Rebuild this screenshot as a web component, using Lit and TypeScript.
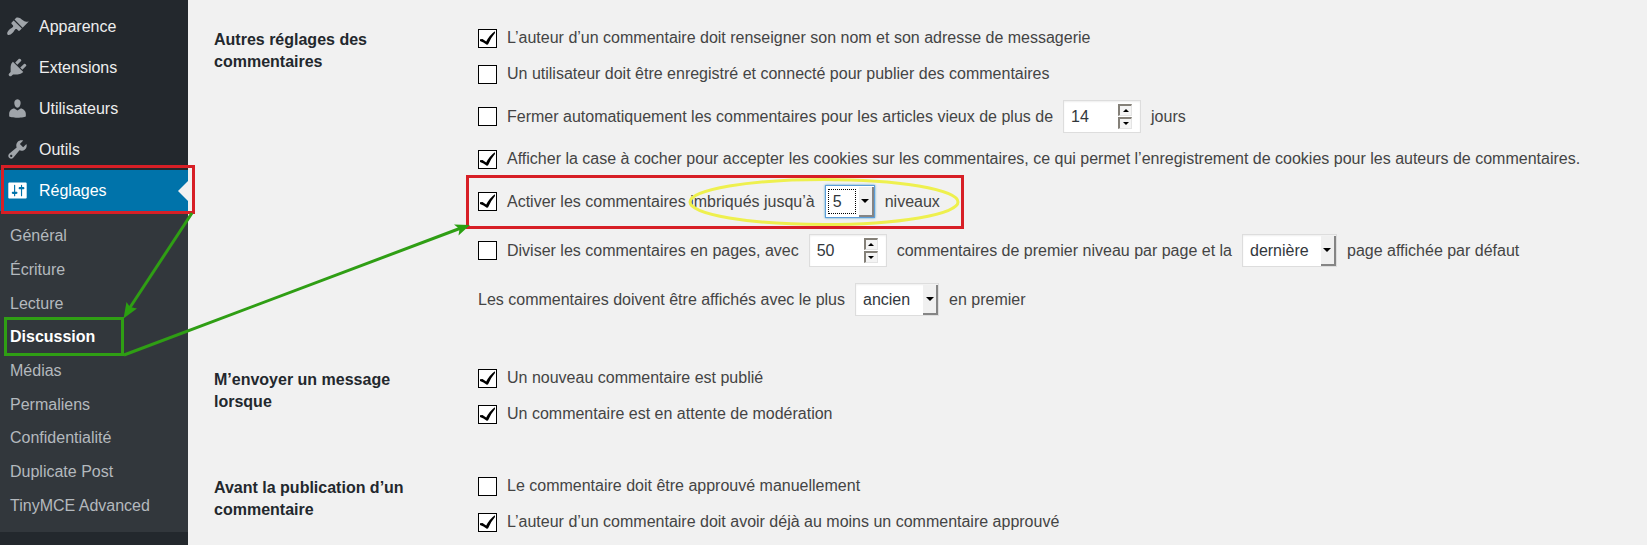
import { LitElement, html, css, nothing } from "lit";
import { customElement } from "lit/decorators.js";
import { classMap } from "lit/directives/class-map.js";

const ICONS: Record<string, string> = {
  appearance:
    "M14.48 11.06L7.41 3.99l1.5-1.5c.5-.56 2.3-.47 3.51.32 1.21.8 1.43 1.28 2.91 2.1 1.18.64 2.45 1.26 4.45.85zm-.71.71L6.7 4.7 4.93 6.47c-.39.39-.39 1.02 0 1.41l1.06 1.06c.39.39.39 1.03 0 1.42-.6.6-1.43 1.11-2.21 1.69-.35.26-.7.53-1.01.84C1.43 14.23.4 16.08 1.4 17.07c.99 1 2.84-.03 4.18-1.36.31-.31.58-.66.85-1.02.57-.78 1.08-1.61 1.69-2.21.39-.39 1.02-.39 1.41 0l1.06 1.06c.39.39 1.02.39 1.41 0z",
  plugins:
    "M13.11 4.36L9.87 7.6 8 5.73l3.24-3.24c.35-.34 1.05-.2 1.56.32.52.51.66 1.21.31 1.55zm-8 1.77l.91-1.12 9.01 9.01-1.19.84c-.71.71-2.63 1.16-3.82 1.16H6.14L4.9 17.26c-.59.59-1.54.59-2.12 0-.59-.58-.59-1.53 0-2.12l1.24-1.24v-3.88c0-1.13.4-3.19 1.09-3.89zm7.26 3.97l3.24-3.24c.34-.35 1.04-.21 1.55.31.52.51.66 1.21.31 1.55l-3.24 3.25z",
  users:
    "M10 9.25c-2.27 0-2.73-3.44-2.73-3.44C7 4.02 7.82 2 9.97 2c2.16 0 2.98 2.02 2.71 3.81 0 0-.41 3.44-2.68 3.44zm0 2.57L12.72 10c2.39 0 4.52 2.33 4.52 4.53v2.49s-3.65 1.13-7.24 1.13c-3.65 0-7.24-1.13-7.24-1.13v-2.49c0-2.25 1.94-4.48 4.47-4.48z",
  tools:
    "M16.68 9.77c-1.34 1.34-3.3 1.67-4.95.99l-5.41 6.52c-.99.99-2.59.99-3.58 0s-.99-2.59 0-3.57l6.52-5.42c-.68-1.65-.35-3.61.99-4.95 1.28-1.28 3.12-1.62 4.72-1.06l-2.89 2.89 2.82 2.82 2.86-2.87c.53 1.58.18 3.39-1.08 4.65zM3.81 16.21c.4.39 1.04.39 1.43 0 .4-.4.4-1.04 0-1.43-.39-.4-1.03-.4-1.43 0-.39.39-.39 1.03 0 1.43z",
  settings:
    "M18 16V4c0-.55-.45-1-1-1H3c-.55 0-1 .45-1 1v12c0 .55.45 1 1 1h14c.55 0 1-.45 1-1zM8 11h1c.55 0 1 .45 1 1s-.45 1-1 1H8v1.5c0 .28-.22.5-.5.5s-.5-.22-.5-.5V13H6c-.55 0-1-.45-1-1s.45-1 1-1h1V5.5c0-.28.22-.5.5-.5s.5.22.5.5V11zm5-2h-1c-.55 0-1-.45-1-1s.45-1 1-1h1V5.5c0-.28.22-.5.5-.5s.5.22.5.5V7h1c.55 0 1 .45 1 1s-.45 1-1 1h-1v5.5c0 .28-.22.5-.5.5s-.5-.22-.5-.5V9z",
};

const MENU = [
  { icon: "appearance", label: "Apparence" },
  { icon: "plugins", label: "Extensions" },
  { icon: "users", label: "Utilisateurs" },
  { icon: "tools", label: "Outils" },
  { icon: "settings", label: "Réglages", current: true },
];

const SUBMENU = [
  "Général",
  "Écriture",
  "Lecture",
  "Discussion",
  "Médias",
  "Permaliens",
  "Confidentialité",
  "Duplicate Post",
  "TinyMCE Advanced",
];

@customElement("admin-menu")
class AdminMenu extends LitElement {
  static styles = css`
    :host {
      display: block;
      background: #23282d;
      padding-top: 6px;
      font-size: 16px;
    }
    ul {
      list-style: none;
      margin: 0;
      padding: 0;
    }
    a {
      color: #eee;
      text-decoration: none;
    }
    .item {
      display: flex;
      align-items: center;
      gap: 10px;
      height: 41px;
      padding-left: 6px;
    }
    .icon {
      width: 23px;
      height: 23px;
      fill: #a0a5aa;
    }
    .current {
      position: relative;
      background: #0073aa;
      color: #fff;
    }
    .current .icon {
      fill: #fff;
    }
    .current::after {
      content: "";
      position: absolute;
      right: 0;
      top: 50%;
      margin-top: -10px;
      border: 10px solid transparent;
      border-left-width: 0;
      border-right-color: #f1f1f1;
    }
    .submenu {
      background: #32373c;
      padding: 8px 0 10px;
    }
    .subitem {
      display: block;
      line-height: 34px;
      padding-left: 10px;
      color: #b4b9be;
    }
    .entry:nth-child(3n) .subitem {
      line-height: 33px;
    }
    .selected {
      color: #fff;
      font-weight: 700;
    }
  `;

  render() {
    return html`<nav aria-label="Menu principal">
      <ul>
        ${MENU.map(
          (m) => html`<li>
            <a href="#" class=${classMap({ item: true, current: !!m.current })}>
              <svg class="icon" viewBox="0 0 20 20" aria-hidden="true"><path d=${ICONS[m.icon]} /></svg>
              <span>${m.label}</span>
            </a>
            ${m.current
              ? html`<ul class="submenu">
                  ${SUBMENU.map(
                    (s) => html`<li class="entry">
                      <a href="#" class=${classMap({ subitem: true, selected: s === "Discussion" })}>${s}</a>
                    </li>`
                  )}
                </ul>`
              : nothing}
          </li>`
        )}
      </ul>
    </nav>`;
  }
}

@customElement("settings-form")
class SettingsForm extends LitElement {
  static styles = css`
    :host {
      display: block;
      font-size: 16px;
      color: #444;
    }
    .section {
      display: grid;
      grid-template-columns: 264px minmax(0, 1fr);
      margin-bottom: 36px;
    }
    .title {
      margin: 9px 0 0;
      padding-right: 60px;
      font-size: 16px;
      line-height: 22px;
      font-weight: 700;
      color: #23282d;
    }
    .line {
      display: flex;
      align-items: center;
      gap: 10px;
      min-height: 36px;
      white-space: nowrap;
    }
    .tall {
      min-height: 49px;
    }
    .check {
      position: relative;
      flex: none;
      width: 19px;
      height: 19px;
    }
    .box {
      appearance: none;
      display: block;
      width: 19px;
      height: 19px;
      margin: 0;
      border: 1px solid #000;
      background: #fff;
    }
    .tick {
      position: absolute;
      inset: 0;
      display: none;
      pointer-events: none;
    }
    .box:checked + .tick {
      display: block;
    }
    .field {
      position: relative;
      display: flex;
    }
    .number,
    .choice {
      appearance: none;
      box-sizing: border-box;
      height: 33px;
      margin: 0;
      padding: 0 0 0 7px;
      border: 1px solid #ddd;
      border-radius: 0;
      background: #fff;
      box-shadow: inset 0 1px 2px rgba(0, 0, 0, 0.07);
      font: inherit;
      color: #32373c;
      outline: none;
    }
    .number {
      width: 78px;
      appearance: textfield;
    }
    .number::-webkit-inner-spin-button {
      appearance: none;
    }
    .choice {
      min-width: 50px;
      padding-right: 27px;
    }
    .active .choice {
      border-color: #5b9dd9;
      box-shadow: 0 0 2px rgba(30, 140, 190, 0.8);
    }
    .active::before {
      content: "";
      position: absolute;
      inset: 4px 19px 4px 3px;
      border: 1px dotted #000;
      pointer-events: none;
    }
    .spin {
      position: absolute;
      top: 4px;
      right: 9px;
      display: grid;
      gap: 1px;
    }
    .step {
      display: grid;
      place-items: center;
      width: 14px;
      height: 12px;
      padding: 0;
      border: solid;
      border-width: 2px 1px 1px 2px;
      border-color: #848078 #e4e4e4 #e4e4e4 #848078;
      background: #f4f4f4;
    }
    .drop {
      position: absolute;
      top: 2px;
      right: 1px;
      bottom: 1px;
      display: grid;
      place-items: center;
      width: 13px;
      border: solid;
      border-width: 0 2px 2px 0;
      border-color: #858585;
      background: #f0f0f0;
      pointer-events: none;
    }
  `;

  private check(id: string, text: string, checked = false) {
    return html`<span class="check">
        <input class="box" type="checkbox" id=${id} ?checked=${checked} />
        <svg class="tick" width="19" height="19" viewBox="0 0 19 19" aria-hidden="true">
          <path d="M2 10.200 4.500 10 8.200 12.600Q11.500 6 16.900 2.200L17 3.900Q12.800 8.500 10 15.600L8.800 15.700Q5.500 12.800 2 11.900Z" />
        </svg>
      </span>
      <label for=${id}>${text}</label>`;
  }

  private number(id: string, value: number, label: string) {
    return html`<span class="field">
      <input class="number" type="number" id=${id} .value=${String(value)} aria-label=${label} />
      <span class="spin">
        <button class="step" type="button" aria-label="Augmenter">
          <svg width="6" height="3" viewBox="0 0 6 3"><path d="M3 0 6 3H0Z" /></svg>
        </button>
        <button class="step" type="button" aria-label="Diminuer">
          <svg width="6" height="3" viewBox="0 0 6 3"><path d="M0 0H6L3 3Z" /></svg>
        </button>
      </span>
    </span>`;
  }

  private choice(id: string, value: string, label: string, active = false) {
    return html`<span class=${classMap({ field: true, active })}>
      <select class="choice" id=${id} aria-label=${label}>
        <option selected>${value}</option>
      </select>
      <span class="drop"><svg width="8" height="4" viewBox="0 0 8 4"><path d="M0 0H8L4 4Z" /></svg></span>
    </span>`;
  }

  render() {
    return html`<form>
      <section class="section">
        <h2 class="title">Autres réglages des commentaires</h2>
        <div>
          <div class="line">
            ${this.check("require", "L’auteur d’un commentaire doit renseigner son nom et son adresse de messagerie", true)}
          </div>
          <div class="line">
            ${this.check("registered", "Un utilisateur doit être enregistré et connecté pour publier des commentaires")}
          </div>
          <div class="line tall">
            ${this.check("close", "Fermer automatiquement les commentaires pour les articles vieux de plus de")}
            ${this.number("days", 14, "Nombre de jours")}
            <label for="days">jours</label>
          </div>
          <div class="line">
            ${this.check("cookies", "Afficher la case à cocher pour accepter les cookies sur les commentaires, ce qui permet l’enregistrement de cookies pour les auteurs de commentaires.", true)}
          </div>
          <div class="line tall">
            ${this.check("thread", "Activer les commentaires imbriqués jusqu’à", true)}
            ${this.choice("depth", "5", "Niveaux", true)}
            <label for="depth">niveaux</label>
          </div>
          <div class="line tall">
            ${this.check("paged", "Diviser les commentaires en pages, avec")}
            ${this.number("perpage", 50, "Commentaires par page")}
            <label for="perpage">commentaires de premier niveau par page et la</label>
            ${this.choice("default", "dernière", "Page par défaut")}
            <label for="default">page affichée par défaut</label>
          </div>
          <div class="line tall">
            <label for="order">Les commentaires doivent être affichés avec le plus</label>
            ${this.choice("order", "ancien", "Ordre")}
            <span>en premier</span>
          </div>
        </div>
      </section>
      <section class="section">
        <h2 class="title">M’envoyer un message lorsque</h2>
        <div>
          <div class="line">${this.check("posted", "Un nouveau commentaire est publié", true)}</div>
          <div class="line">${this.check("held", "Un commentaire est en attente de modération", true)}</div>
        </div>
      </section>
      <section class="section">
        <h2 class="title">Avant la publication d’un commentaire</h2>
        <div>
          <div class="line">${this.check("manual", "Le commentaire doit être approuvé manuellement")}</div>
          <div class="line">
            ${this.check("previous", "L’auteur d’un commentaire doit avoir déjà au moins un commentaire approuvé", true)}
          </div>
        </div>
      </section>
    </form>`;
  }
}

@customElement("app-root")
class AppRoot extends LitElement {
  static styles = css`
    :host {
      position: relative;
      display: grid;
      grid-template-columns: 188px minmax(0, 1fr);
      height: 100vh;
      overflow: hidden;
      background: #f1f1f1;
      font-family: "Liberation Sans", Arial, sans-serif;
    }
    .content {
      padding: 20px 20px 0 26px;
    }
    .marks {
      position: absolute;
      top: 0;
      left: 0;
      pointer-events: none;
      fill: none;
      stroke-width: 3;
    }
    .red {
      stroke: #d71f26;
    }
    .green {
      stroke: #2f9e14;
    }
    .yellow {
      stroke: #eef04e;
    }
    .head {
      fill: #2aa010;
    }
  `;

  render() {
    return html`<admin-menu></admin-menu>
      <main class="content"><settings-form></settings-form></main>
      <svg class="marks" width="1000" height="545" viewBox="0 0 1000 545" aria-hidden="true">
        <rect class="red" x="2.500" y="166.500" width="191" height="46" />
        <rect class="red" x="467.500" y="176.500" width="495" height="51" />
        <ellipse class="yellow" cx="824" cy="202" rx="134" ry="22.500" />
        <rect class="green" x="5.500" y="318.500" width="117" height="36" />
        <path class="green" d="M192 213 129 309M124 355 461 228" />
        <path class="head" d="M123.500 318.500 126.500 302 130 307 137 308.500Z" />
        <path class="head" d="M470 225 458.500 235.500 459.500 229 454 224.500Z" />
      </svg>`;
  }
}
